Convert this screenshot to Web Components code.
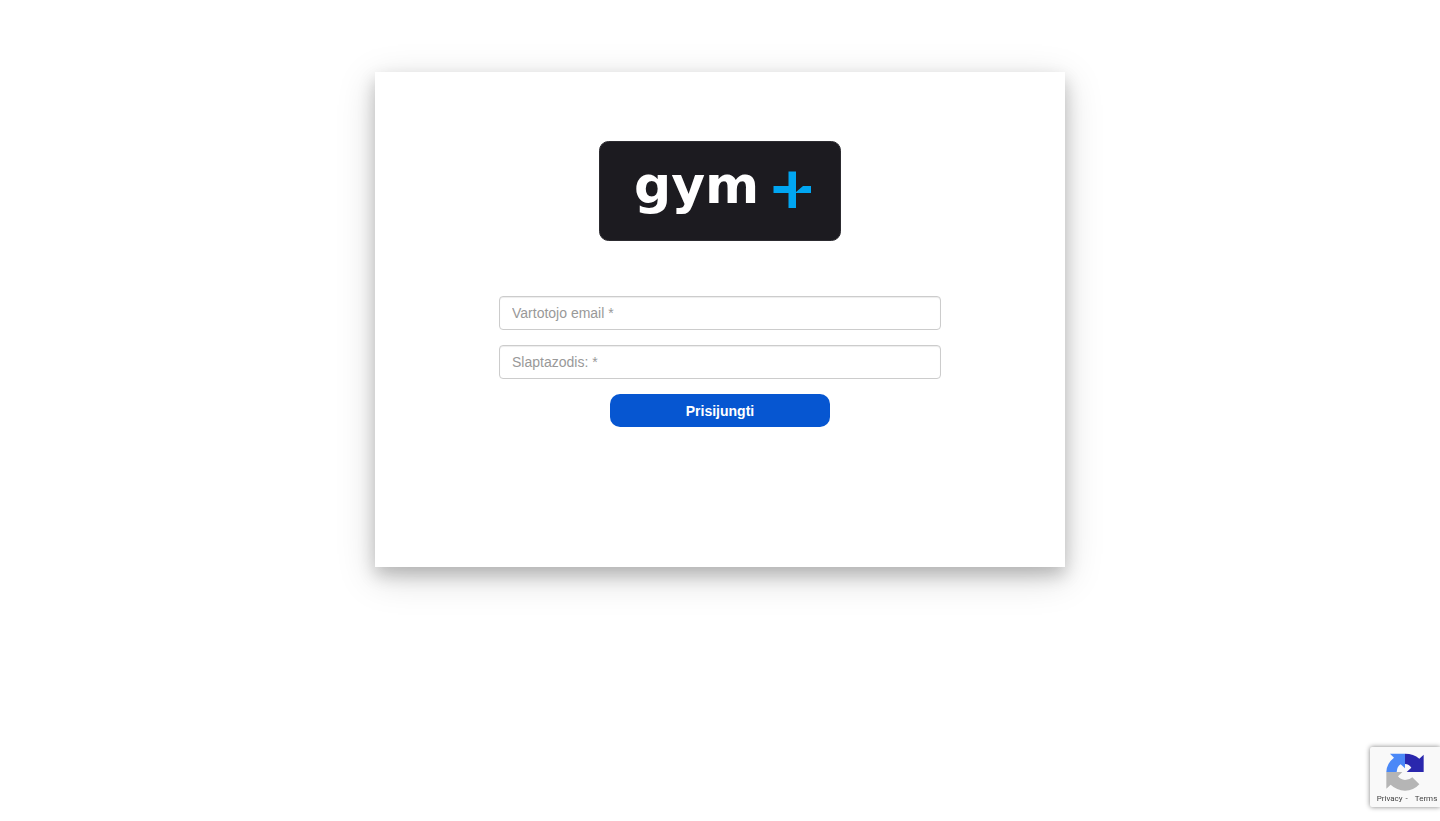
<!DOCTYPE html>
<html lang="lt">
<head>
<meta charset="utf-8">
<meta name="viewport" content="width=device-width, initial-scale=1">
<title>gym+</title>
<style>
  body { margin: 0; background: #fff; color: #333; font: 14px/20px "Liberation Sans", Arial, sans-serif; }
</style>
</head>
<body>
<login-card>
  <gym-logo slot="logo"></gym-logo>
  <text-field type="email" name="email" label="Vartotojo email *"></text-field>
  <text-field type="password" name="password" label="Slaptazodis: *"></text-field>
  <submit-button slot="action">Prisijungti</submit-button>
</login-card>
<captcha-badge></captcha-badge>

<script>
  const define = (name, html, setup) => customElements.define(name, class extends HTMLElement {
    constructor() {
      super();
      this.attachShadow({ mode: 'open' }).innerHTML = html;
    }
    connectedCallback() {
      if (setup) setup(this, this.shadowRoot);
    }
  });

  define('login-card', `
    <style>
      :host { display: block; padding: 72px 16px; }
      main {
        box-sizing: border-box; max-width: 690px; margin: 0 auto; padding: 69px 124px 140px;
        background: #fff;
        box-shadow: 0 8px 16px rgba(0,0,0,.2), 0 10px 36px rgba(0,0,0,.17);
      }
      header { display: flex; justify-content: center; margin-bottom: 55px; }
      form { display: flex; flex-direction: column; gap: 15px; }
      .action { display: flex; justify-content: center; }
      @media (max-width: 600px) { main { padding: 48px 24px; } }
    </style>
    <main>
      <header><slot name="logo"></slot></header>
      <form>
        <slot></slot>
        <div class="action"><slot name="action"></slot></div>
      </form>
    </main>`);

  define('gym-logo', `
    <style>
      :host { display: block; }
      svg { display: block; width: 242px; height: 100px; }
      text { font: bold 52px "DejaVu Sans", sans-serif; fill: #fff; }
    </style>
    <svg viewBox="0 0 242 100" role="img" aria-label="gym+">
      <rect x=".5" y=".5" width="241" height="99" rx="9" fill="#1c1b20" stroke="#2c2b30"/>
      <text x="35" y="62">gym</text>
      <path fill="#00a6f2" d="M189.500 30.500h7.500V67h-7.500V52H174.500v-7h15zM204 45h8v7h-15v-1z"/>
    </svg>`);

  define('text-field', `
    <style>
      :host { display: block; }
      input {
        display: block; box-sizing: border-box; width: 100%; height: 34px; margin: 0; padding: 6px 12px;
        border: 1px solid #ccc; border-radius: 4px; background: #fff; color: #555;
        font: inherit; box-shadow: inset 0 1px 1px rgba(0,0,0,.075);
      }
      input::placeholder { color: #999; opacity: 1; }
      input:focus { outline: 0; border-color: #66afe9; }
    </style>
    <input>`, (host, root) => {
      const input = root.querySelector('input');
      input.type = host.getAttribute('type');
      input.name = host.getAttribute('name');
      input.placeholder = host.getAttribute('label');
      input.setAttribute('aria-label', host.getAttribute('label'));
    });

  define('submit-button', `
    <style>
      :host { display: block; width: 220px; }
      button {
        display: block; width: 100%; height: 33px; margin: 0; padding: 0 12px; border: 0; border-radius: 10px;
        background: #0656d1; color: #fff; font: inherit; font-weight: bold; cursor: pointer;
      }
    </style>
    <button type="submit"><slot></slot></button>`);

  define('captcha-badge', `
    <style>
      :host {
        position: fixed; right: 0; bottom: 14px; display: flex; flex-direction: column; align-items: center;
        box-sizing: border-box; width: 70px; height: 60px; padding-top: 6px;
        background: #f9f9f9; border-radius: 2px 0 0 2px; box-shadow: 0 0 5px gray;
        font: 8px/16px Roboto, sans-serif;
      }
      svg { display: block; width: 38px; height: 38px; }
      nav { display: flex; gap: 3px; padding-left: 4px; color: #444; white-space: pre; }
      a { color: inherit; text-decoration: none; }
      .terms { margin-left: 4px; }
    </style>
    <svg viewBox="0 0 114 114" aria-hidden="true">
      <path fill="#4a88f7" d="M12 2H57V46L44 34Q33 41 32 57H1Q1 32 24 14z"/>
      <path fill="#2a27ad" d="M57 2Q83 2 100 17L113 5V57H62L76 44Q70 34 57 33z"/>
      <path fill="#b5b5b5" d="M1 57H49L36 70Q43 80 57 81Q71 81 79 73L100 94Q83 113 57 113Q32 112 14 95L1 107z"/>
    </svg>
    <nav><a href="#privacy">Privacy</a><span>-</span><a class="terms" href="#terms">Terms</a></nav>`);
</script>
</body>
</html>
